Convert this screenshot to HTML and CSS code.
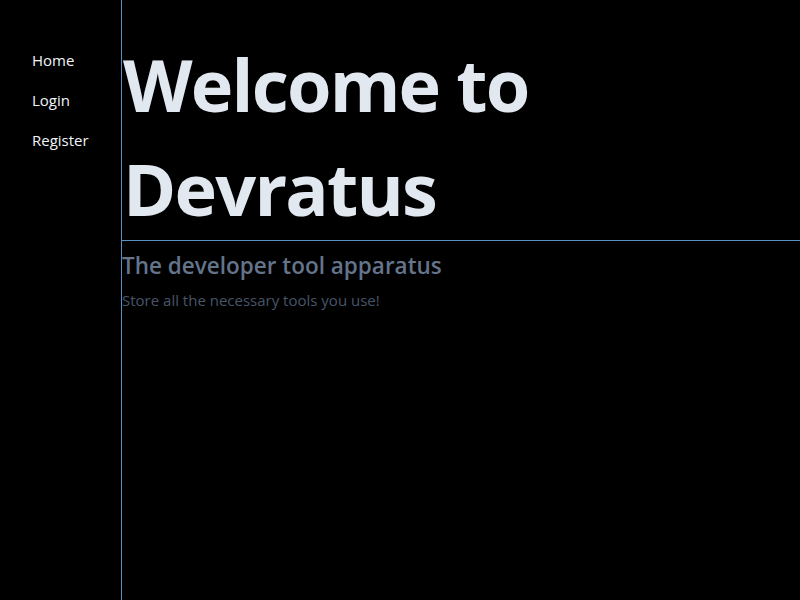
FILE: index.html
```html
<!DOCTYPE html>
<html lang="en">
<head>
<meta charset="utf-8">
<title>Devratus</title>
<link rel="stylesheet" href="styles.css">
</head>
<body>
<div class="layout">
  <nav class="sidebar">
    <a class="nav-link" href="#">Home</a>
    <a class="nav-link" href="#">Login</a>
    <a class="nav-link" href="#">Register</a>
  </nav>
  <main class="content">
    <h1 class="title">Welcome to Devratus</h1>
    <h2 class="subtitle">The developer tool apparatus</h2>
    <p class="tagline">Store all the necessary tools you use!</p>
  </main>
</div>
</body>
</html>
```
FILE: styles.css
```css
html, body {
  margin: 0;
  padding: 0;
  background: #000;
  height: 100%;
}
body {
  font-family: "Open Sans", "Noto Sans", sans-serif;
}
.layout {
  display: flex;
  min-height: 100vh;
}
.sidebar {
  width: 122px;
  flex: none;
  border-right: 1px solid #5a8fc2;
  display: flex;
  flex-direction: column;
  gap: 18px;
  padding: 49px 0 0 32px;
  box-sizing: border-box;
}
.nav-link {
  color: #f1f5f9;
  text-decoration: none;
  font-size: 15px;
  line-height: 22px;
}
.content {
  flex: 1;
  padding-top: 32px;
}
.title {
  margin: 0;
  padding-left: 1px;
  color: #e2e8f0;
  font-size: 72px;
  font-weight: 700;
  line-height: 104px;
  border-bottom: 1px solid #5a8fc2;
  padding-right: 250px;
  letter-spacing: -1.8px;
}
.subtitle {
  margin: 9px 0 0;
  color: #64748b;
  font-size: 22.5px;
  font-weight: 600;
  line-height: 32px;
}
.tagline {
  margin: 7px 0 0;
  color: #475569;
  font-size: 15px;
  line-height: 22px;
}
```
